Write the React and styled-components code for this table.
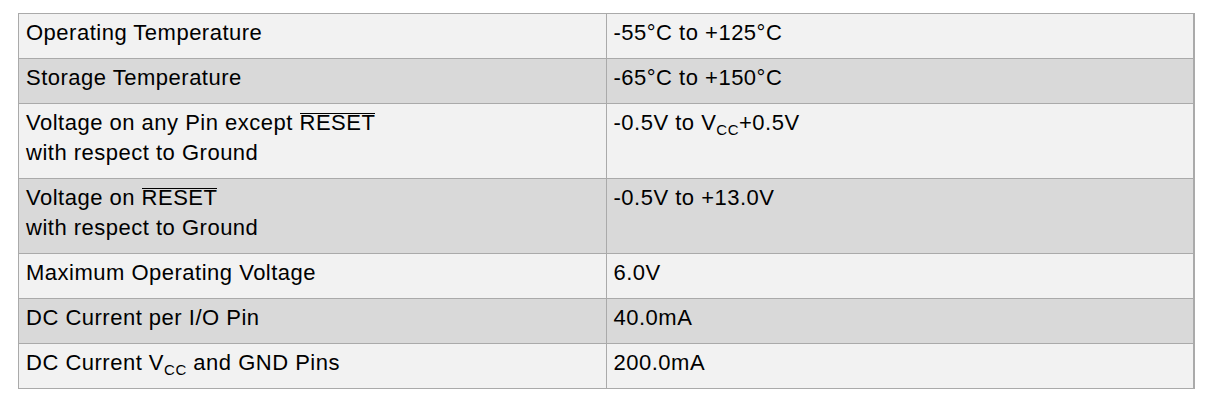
import styled, { createGlobalStyle } from 'styled-components';

const GlobalStyle = createGlobalStyle`
    html, body {
        margin: 0;
        padding: 0;
        background: #ffffff;
    }
`

const Page = styled.div`
    padding: 13px 0 0 18px;
    font-family: "Liberation Sans", Arial, sans-serif;
`

const RatingsTable = styled.table`
    width: 1177px;
    border-collapse: collapse;
    table-layout: fixed;
    border: 1px solid #aaaaaa;
    border-right-width: 2px;
`

const Row = styled.tr`
    background-color: ${props => props.$shade ? '#d9d9d9' : '#f2f2f2'};
`

const Cell = styled.td`
    width: 50%;
    border: 1px solid #aaaaaa;
    padding: 4px 7px 10px;
    vertical-align: top;
    font-size: 22px;
    letter-spacing: 0.5px;
    line-height: 30px;
    color: #000000;
`

const Overbar = styled.span`
    display: inline-block;
    line-height: 18px;
    border-top: 1px solid #000000;
`

const Sub = styled.sub`
    font-size: 15px;
    letter-spacing: 0.5px;
    line-height: 0;
    vertical-align: -5px;
`

const Vcc = () => <>V<Sub>CC</Sub></>

const ratings = [
    { name: 'Operating Temperature', value: '-55°C to +125°C' },
    { name: 'Storage Temperature', value: '-65°C to +150°C' },
    {
        name: <>Voltage on any Pin except <Overbar>RESET</Overbar><br />with respect to Ground</>,
        value: <>-0.5V to <Vcc />+0.5V</>,
    },
    {
        name: <>Voltage on <Overbar>RESET</Overbar><br />with respect to Ground</>,
        value: '-0.5V to +13.0V',
    },
    { name: 'Maximum Operating Voltage', value: '6.0V' },
    { name: 'DC Current per I/O Pin', value: '40.0mA' },
    { name: <>DC Current <Vcc /> and GND Pins</>, value: '200.0mA' },
]

const App = () => {
    return (
        <Page>
            <GlobalStyle />
            <RatingsTable>
                <tbody>
                    {ratings.map((r, i) => (
                        <Row key={i} $shade={i % 2 === 1}>
                            <Cell>{r.name}</Cell>
                            <Cell>{r.value}</Cell>
                        </Row>
                    ))}
                </tbody>
            </RatingsTable>
        </Page>
    );
}

export default App;
